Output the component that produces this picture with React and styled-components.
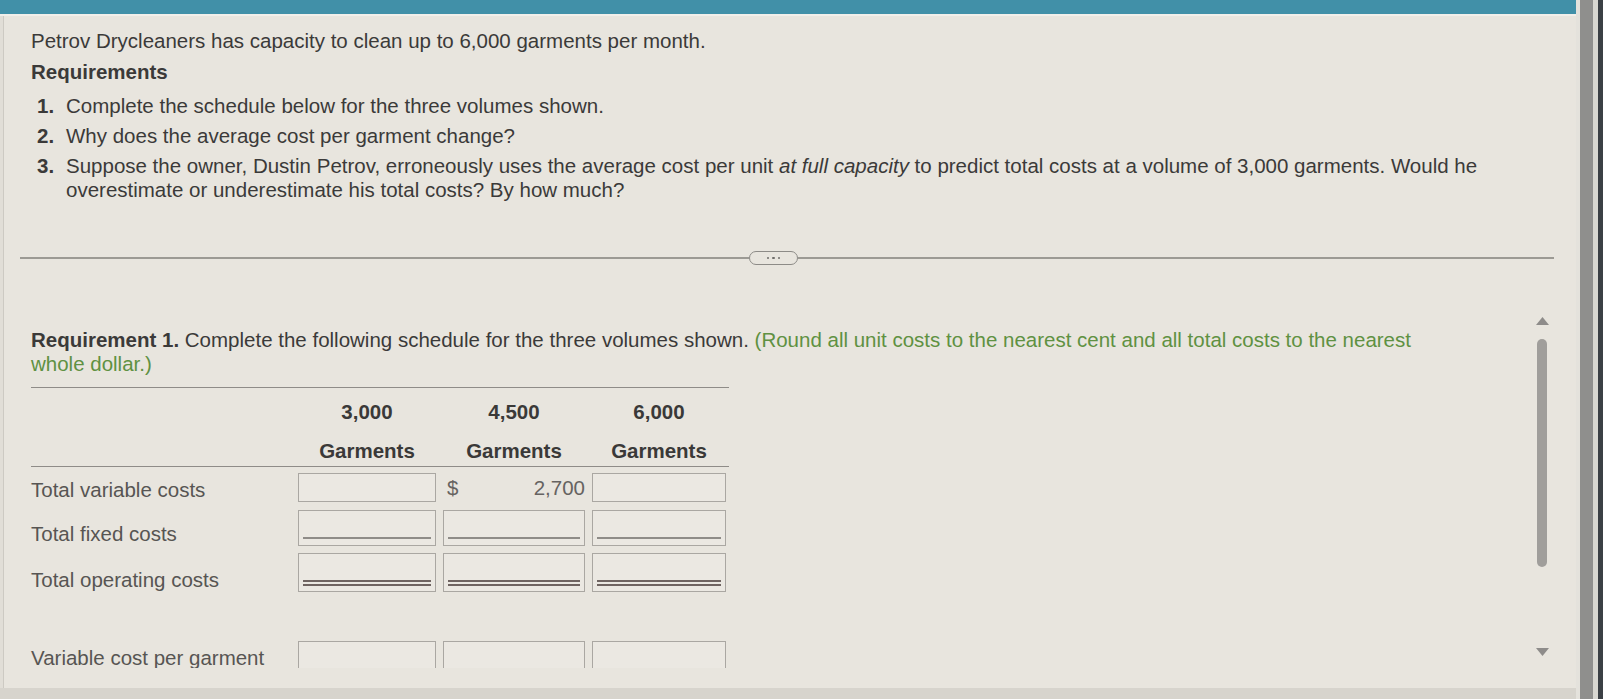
import React from 'react';
import styled, { createGlobalStyle } from 'styled-components';

const Global = createGlobalStyle`
  html, body { margin: 0; padding: 0; }
  body {
    background: #3b4045;
    font-family: "Liberation Sans", Arial, sans-serif;
    overflow: hidden;
  }
`;

const Screen = styled.div`
  width: 1603px;
  height: 699px;
  display: flex;
  background: #3b4045;
`;

const Panel = styled.div`
  width: 1576px;
  height: 699px;
  display: flex;
  flex-direction: column;
  background: #e8e5de;
  box-shadow: inset 3px 0 0 #e1ded7, inset 4px 0 0 #cdcac3;
  color: #3b3a39;
  font-size: 20.5px;
  line-height: 24px;
`;

const Bezel = styled.div`
  display: flex;
  flex: 1;
`;

const BezelStripe = styled.div`
  width: ${(p) => p.$w}px;
  background: ${(p) => p.$c};
`;

const TopBar = styled.div`
  height: 14px;
  background: #4190a8;
  border-bottom: 2px solid #f1efea;
  flex-shrink: 0;
`;

const Problem = styled.section`
  padding: 13px 0 0 31px;
`;

const Lead = styled.p`
  margin: 0;
`;

const Heading = styled.h3`
  margin: 7px 0 0;
  font-size: 20.5px;
  line-height: 24px;
  font-weight: 700;
`;

const List = styled.ol`
  list-style: none;
  margin: 10px 0 0;
  padding: 0 0 0 6px;
`;

const Item = styled.li`
  display: grid;
  grid-template-columns: 29px 1430px;
  margin-top: 6px;
  &:first-child { margin-top: 0; }
`;

const Num = styled.span`
  font-weight: 700;
`;

const Divider = styled.div`
  display: flex;
  align-items: center;
  margin: 49px 0 0 20px;
  width: 1534px;
  height: 14px;
`;

const Rule = styled.div`
  height: 1.5px;
  background: #9c9a94;
  flex: ${(p) => (p.$grow ? 1 : 'none')};
  width: ${(p) => (p.$grow ? 'auto' : `${p.$w}px`)};
`;

const Pill = styled.div`
  width: 49px;
  height: 14px;
  box-sizing: border-box;
  border: 1.5px solid #8d8b87;
  border-radius: 8px;
  display: flex;
  align-items: center;
  justify-content: center;
  gap: 3px;
`;

const Dot = styled.span`
  width: 2.5px;
  height: 2.5px;
  border-radius: 50%;
  background: #6f6d6a;
`;

const ScrollArea = styled.div`
  height: 403px;
  display: flex;
  overflow: hidden;
  flex-shrink: 0;
`;

const Content = styled.div`
  flex: 1;
  padding: 63px 0 0 31px;
`;

const Instruction = styled.p`
  margin: 0;
  max-width: 1400px;
`;

const Green = styled.span`
  color: #5f9142;
`;

const Table = styled.div`
  margin-top: 11px;
  width: 698px;
  border-top: 1.5px solid #8f8c88;
`;

const Header = styled.div`
  display: grid;
  grid-template-columns: 260px 138px 142px 134px;
  column-gap: 7px;
  padding: 12px 0 3px;
  border-bottom: 1.5px solid #8f8c88;
`;

const HeadCell = styled.div`
  grid-column: ${(p) => p.$col};
  display: flex;
  flex-direction: column;
  align-items: center;
  gap: 15px;
  font-weight: 700;
  color: #3a3938;
`;

const Row = styled.div`
  display: grid;
  grid-template-columns: 260px 138px 142px 134px;
  column-gap: 7px;
  height: ${(p) => p.$h}px;
  margin-top: ${(p) => p.$mt}px;
`;

const Label = styled.div`
  align-self: end;
  color: #575553;
  white-space: nowrap;
`;

const Field = styled.div`
  box-sizing: border-box;
  border: 1.5px solid #aaa7a2;
  background: #ebe8e2;
  display: flex;
  flex-direction: column;
  justify-content: flex-end;
  padding: 0 4px ${(p) => (p.$kind === 'double' ? 5 : 6)}px;
`;

const Underline = styled.div`
  height: ${(p) => (p.$kind === 'double' ? 2 : 0)}px;
  border-top: 2px solid ${(p) => (p.$kind === 'double' ? '#6f6461' : '#8f8c88')};
  border-bottom: ${(p) => (p.$kind === 'double' ? '2px solid #6f6461' : 'none')};
`;

const Given = styled.div`
  display: flex;
  align-items: center;
  justify-content: space-between;
  padding-left: 4px;
  color: #666361;
`;

const Rail = styled.div`
  width: 16px;
  margin-right: 26px;
  display: flex;
  flex-direction: column;
  align-items: center;
  padding-top: 52px;
`;

const Arrow = styled.svg`
  display: block;
  margin-top: ${(p) => p.$mt || 0}px;
`;

const Thumb = styled.div`
  width: 10px;
  height: 228px;
  margin-top: 14px;
  border-radius: 5px;
  background: #a09e9b;
`;

const Footer = styled.div`
  flex: 1;
  display: flex;
  flex-direction: column;
  justify-content: flex-end;
`;

const FooterStrip = styled.div`
  height: 11px;
  background: #d7d4cd;
`;

function Cell({ kind }) {
  return (
    <Field $kind={kind}>
      {kind !== 'plain' && <Underline $kind={kind} />}
    </Field>
  );
}

const rows = [
  { label: 'Total variable costs', h: 29, mt: 6, kind: 'plain', given: true },
  { label: 'Total fixed costs', h: 36, mt: 8, kind: 'single' },
  { label: 'Total operating costs', h: 39, mt: 7, kind: 'double' },
  { label: 'Variable cost per garment', h: 29, mt: 49, kind: 'plain' },
  { label: 'Fixed cost per garment', h: 29, mt: 8, kind: 'single' },
  { label: 'Average cost per garment', h: 39, mt: 7, kind: 'double' },
];

export default function App() {
  return (
    <Screen>
      <Global />
      <Panel>
        <TopBar />
        <Problem>
          <Lead>Petrov Drycleaners has capacity to clean up to 6,000 garments per month.</Lead>
          <Heading>Requirements</Heading>
          <List>
            <Item>
              <Num>1.</Num>
              <span>Complete the schedule below for the three volumes shown.</span>
            </Item>
            <Item>
              <Num>2.</Num>
              <span>Why does the average cost per garment change?</span>
            </Item>
            <Item>
              <Num>3.</Num>
              <span>
                Suppose the owner, Dustin Petrov, erroneously uses the average cost per unit <i>at full capacity</i> to
                predict total costs at a volume of 3,000 garments. Would he overestimate or underestimate his total
                costs? By how much?
              </span>
            </Item>
          </List>
        </Problem>
        <Divider>
          <Rule $w={729} />
          <Pill>
            <Dot />
            <Dot />
            <Dot />
          </Pill>
          <Rule $grow />
        </Divider>
        <ScrollArea>
          <Content>
            <Instruction>
              <b>Requirement 1.</b> Complete the following schedule for the three volumes shown.{' '}
              <Green>(Round all unit costs to the nearest cent and all total costs to the nearest whole dollar.)</Green>
            </Instruction>
            <Table>
              <Header>
                <HeadCell $col={2}>
                  <span>3,000</span>
                  <span>Garments</span>
                </HeadCell>
                <HeadCell $col={3}>
                  <span>4,500</span>
                  <span>Garments</span>
                </HeadCell>
                <HeadCell $col={4}>
                  <span>6,000</span>
                  <span>Garments</span>
                </HeadCell>
              </Header>
              {rows.map((r) => (
                <Row key={r.label} $h={r.h} $mt={r.mt}>
                  <Label>{r.label}</Label>
                  <Cell kind={r.kind} />
                  {r.given ? (
                    <Given>
                      <span>$</span>
                      <span>2,700</span>
                    </Given>
                  ) : (
                    <Cell kind={r.kind} />
                  )}
                  <Cell kind={r.kind} />
                </Row>
              ))}
            </Table>
          </Content>
          <Rail>
            <Arrow width="13" height="8" viewBox="0 0 13 8">
              <polygon points="6.5,0 13,8 0,8" fill="#8e8c8a" />
            </Arrow>
            <Thumb />
            <Arrow $mt={81} width="13" height="8" viewBox="0 0 13 8">
              <polygon points="0,0 13,0 6.5,8" fill="#8e8c8a" />
            </Arrow>
          </Rail>
        </ScrollArea>
        <Footer>
          <FooterStrip />
        </Footer>
      </Panel>
      <Bezel>
        <BezelStripe $w={4} $c="#e4e2dc" />
        <BezelStripe $w={13} $c="#8f8f8d" />
        <BezelStripe $w={5} $c="#d8d7d1" />
        <BezelStripe $w={5} $c="#3b4045" />
      </Bezel>
    </Screen>
  );
}
